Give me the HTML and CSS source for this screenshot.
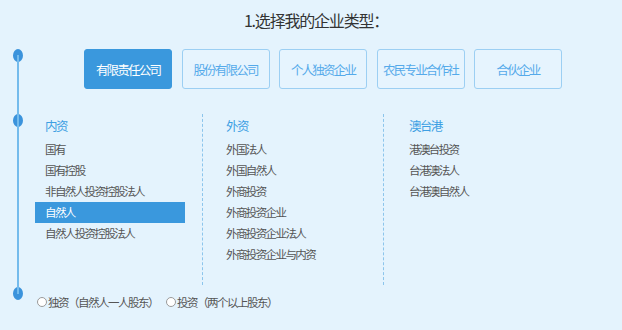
FILE: index.html
```html
<!DOCTYPE html>
<html lang="zh-CN">
  <head>
    <meta charset="UTF-8" />
    <title>选择企业类型</title>
    <link rel="stylesheet" href="styles.css">
  </head>
  <body>
    <h1 class="title">1.选择我的企业类型：</h1>

    <div class="steps">
      <div class="step step-type">
        <span class="dot"></span>
        <div class="type-list">
          <button class="type-btn active">有限责任公司</button>
          <button class="type-btn">股份有限公司</button>
          <button class="type-btn">个人独资企业</button>
          <button class="type-btn">农民专业合作社</button>
          <button class="type-btn">合伙企业</button>
        </div>
      </div>

      <div class="step step-source">
        <span class="dot"></span>
        <div class="columns">
          <div class="col col-1">
            <div class="col-head">内资</div>
            <div class="col-item">国有</div>
            <div class="col-item">国有控股</div>
            <div class="col-item">非自然人投资控股法人</div>
            <div class="col-item selected">自然人</div>
            <div class="col-item">自然人投资控股法人</div>
          </div>
          <div class="col col-2">
            <div class="col-head">外资</div>
            <div class="col-item">外国法人</div>
            <div class="col-item">外国自然人</div>
            <div class="col-item">外商投资</div>
            <div class="col-item">外商投资企业</div>
            <div class="col-item">外商投资企业法人</div>
            <div class="col-item">外商投资企业与内资</div>
          </div>
          <div class="col col-3">
            <div class="col-head">澳台港</div>
            <div class="col-item">港澳台投资</div>
            <div class="col-item">台港澳法人</div>
            <div class="col-item">台港澳自然人</div>
          </div>
        </div>
      </div>

      <div class="step step-holder">
        <span class="dot"></span>
        <div class="holders">
          <label class="holder"><span class="radio"></span>独资（自然人一人股东）</label>
          <label class="holder"><span class="radio"></span>投资（两个以上股东）</label>
        </div>
      </div>
    </div>
  </body>
</html>
```

FILE: styles.css
```css
body {
  margin: 0;
  background: #e4f3fd;
  font-family: "Microsoft YaHei", "Noto Sans CJK SC", sans-serif;
  color: #555;
  height: 330px;
  overflow: hidden;
}
.title {
  margin: 0;
  padding-top: 8px;
  padding-left: 10px;
  height: 41px;
  box-sizing: border-box;
  text-align: center;
  font-size: 16px;
  font-weight: normal;
  line-height: 24px;
  letter-spacing: -1.2px;
  color: #333;
}
.steps {
  position: relative;
  padding-left: 13px;
}
.steps::before {
  content: "";
  position: absolute;
  left: 17px;
  top: 6px;
  height: 239px;
  width: 2px;
  background: #74bbec;
}
.step {
  display: grid;
  grid-template-columns: 22px 1fr;
}
.dot {
  width: 10px;
  height: 13px;
  border-radius: 50%;
  background: #3b93dc;
}
.step-type {
  margin-top: 8px;
}
.type-list {
  display: flex;
  gap: 9.5px;
  padding-left: 49px;
}
.type-btn {
  width: 88px;
  height: 40px;
  padding: 0;
  border: 1px solid #9ccff3;
  border-radius: 3px;
  background: #e6f4fe;
  color: #55aaea;
  font-family: inherit;
  font-size: 12.5px;
  letter-spacing: -1.8px;
  cursor: pointer;
}
.type-btn.active {
  background: #3a98dd;
  border-color: #3a98dd;
  color: #fff;
}
.step-source {
  margin-top: 25px;
}
.columns {
  display: flex;
}
.col {
  font-size: 11.5px;
  letter-spacing: -1.6px;
  padding-bottom: 20px;
}
.col-1 {
  width: 167px;
}
.col-2 {
  width: 181px;
  box-sizing: border-box;
  border-left: 1px dashed #8cc5ec;
  padding-left: 23px;
}
.col-3 {
  border-left: 1px dashed #8cc5ec;
  padding-left: 25px;
}
.col-head {
  line-height: 24px;
  margin-bottom: 1px;
  font-size: 12.5px;
  color: #3d9fe3;
}
.col-1 .col-head,
.col-1 .col-item {
  padding-left: 10px;
}
.col-item {
  line-height: 21px;
  height: 21px;
  color: #555;
}
.col-item.selected {
  width: 150px;
  box-sizing: border-box;
  background: #3a98dd;
  color: #fff;
}
.step-holder {
  margin-top: 2px;
}
.holders {
  display: flex;
  gap: 8px;
  padding-left: 2px;
  padding-top: 5px;
  line-height: 20px;
  font-size: 11.5px;
  letter-spacing: -1.5px;
  color: #555;
}
.holder {
  display: flex;
  align-items: center;
}
.radio {
  width: 8px;
  height: 8px;
  border: 1px solid #9a9a9a;
  border-radius: 50%;
  background: #fff;
  margin-right: 1px;
}
```
